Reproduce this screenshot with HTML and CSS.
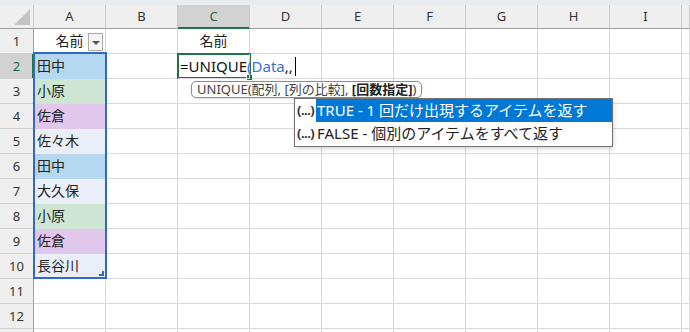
FILE: index.html
```html
<!DOCTYPE html>
<html lang="ja">
<head>
  <meta charset="UTF-8" />
  <title>UNIQUE</title>
  <link rel="stylesheet" href="styles.css">
</head>
<body>
<div class="app">
  <div class="topbar"></div>

  <div class="sheet">
    <div class="corner"><span class="tri"></span></div>
    <div class="colhead">A</div><div class="colhead">B</div><div class="colhead sel">C</div><div class="colhead">D</div><div class="colhead">E</div><div class="colhead">F</div><div class="colhead">G</div><div class="colhead">H</div><div class="colhead">I</div><div class="colhead"></div>

    <div class="rowhead">1</div><div class="cell center hasfilter">名前<span class="filter"></span></div><div class="cell"></div><div class="cell center">名前</div><div class="cell"></div><div class="cell"></div><div class="cell"></div><div class="cell"></div><div class="cell"></div><div class="cell"></div><div class="cell"></div>

    <div class="rowhead sel">2</div><div class="cell blue">田中</div><div class="cell"></div><div class="cell editing">=UNIQUE<span class="ref">(Data</span>,,<span class="caret"></span></div><div class="cell"></div><div class="cell"></div><div class="cell"></div><div class="cell"></div><div class="cell"></div><div class="cell"></div><div class="cell"></div>

    <div class="rowhead">3</div><div class="cell green">小原</div><div class="cell"></div><div class="cell"></div><div class="cell"></div><div class="cell"></div><div class="cell"></div><div class="cell"></div><div class="cell"></div><div class="cell"></div><div class="cell"></div>

    <div class="rowhead">4</div><div class="cell purple">佐倉</div><div class="cell"></div><div class="cell"></div><div class="cell"></div><div class="cell"></div><div class="cell"></div><div class="cell"></div><div class="cell"></div><div class="cell"></div><div class="cell"></div>

    <div class="rowhead">5</div><div class="cell tint">佐々木</div><div class="cell"></div><div class="cell"></div><div class="cell"></div><div class="cell"></div><div class="cell"></div><div class="cell"></div><div class="cell"></div><div class="cell"></div><div class="cell"></div>

    <div class="rowhead">6</div><div class="cell blue">田中</div><div class="cell"></div><div class="cell"></div><div class="cell"></div><div class="cell"></div><div class="cell"></div><div class="cell"></div><div class="cell"></div><div class="cell"></div><div class="cell"></div>

    <div class="rowhead">7</div><div class="cell tint">大久保</div><div class="cell"></div><div class="cell"></div><div class="cell"></div><div class="cell"></div><div class="cell"></div><div class="cell"></div><div class="cell"></div><div class="cell"></div><div class="cell"></div>

    <div class="rowhead">8</div><div class="cell green">小原</div><div class="cell"></div><div class="cell"></div><div class="cell"></div><div class="cell"></div><div class="cell"></div><div class="cell"></div><div class="cell"></div><div class="cell"></div><div class="cell"></div>

    <div class="rowhead">9</div><div class="cell purple">佐倉</div><div class="cell"></div><div class="cell"></div><div class="cell"></div><div class="cell"></div><div class="cell"></div><div class="cell"></div><div class="cell"></div><div class="cell"></div><div class="cell"></div>

    <div class="rowhead">10</div><div class="cell tint">長谷川</div><div class="cell"></div><div class="cell"></div><div class="cell"></div><div class="cell"></div><div class="cell"></div><div class="cell"></div><div class="cell"></div><div class="cell"></div><div class="cell"></div>

    <div class="rowhead">11</div><div class="cell"></div><div class="cell"></div><div class="cell"></div><div class="cell"></div><div class="cell"></div><div class="cell"></div><div class="cell"></div><div class="cell"></div><div class="cell"></div><div class="cell"></div>

    <div class="rowhead">12</div><div class="cell"></div><div class="cell"></div><div class="cell"></div><div class="cell"></div><div class="cell"></div><div class="cell"></div><div class="cell"></div><div class="cell"></div><div class="cell"></div><div class="cell"></div>

    <div class="rowhead"></div><div class="cell"></div><div class="cell"></div><div class="cell"></div><div class="cell"></div><div class="cell"></div><div class="cell"></div><div class="cell"></div><div class="cell"></div><div class="cell"></div><div class="cell"></div>
  </div>

  <!-- selection overlays -->
  <div class="range"><span class="range-handle"></span></div>
  <div class="active"><span class="active-handle"></span></div>

  <!-- formula hint -->
  <div class="hint">UNIQUE(配列, [列の比較], <b>[回数指定]</b>)</div>

  <div class="menu">
    <div class="menu-item selected"><span class="arg">(...)</span><span class="label">TRUE - 1 回だけ出現するアイテムを返す</span></div>
    <div class="menu-item"><span class="arg">(...)</span><span class="label">FALSE - 個別のアイテムをすべて返す</span></div>
  </div>
</div>
</body>
</html>
```

FILE: styles.css
```css
body {
  margin: 0;
  font-family: "Noto Sans", "Noto Sans CJK JP", sans-serif;
  background: #fff;
  overflow: hidden;
}
.app {
  position: relative;
  width: 690px;
  height: 332px;
  overflow: hidden;
}
.topbar {
  height: 5px;
  background: #e8ebef;
}
.sheet {
  display: grid;
  grid-template-columns: 34px repeat(9, 72px) 1fr;
  grid-template-rows: 24px;
  grid-auto-rows: 25px;
}
.sheet > div {
  box-sizing: border-box;
  border-right: 1px solid #dadada;
  border-bottom: 1px solid #dadada;
  line-height: 24px;
  font-size: 14px;
  color: #222;
  white-space: nowrap;
}
.corner {
  background: #efefef;
  display: flex;
  align-items: flex-end;
  justify-content: flex-end;
  padding: 0 3px 3px 0;
  border-right-color: #c9c9c9 !important;
  border-bottom-color: #9e9e9e !important;
}
.tri {
  width: 16px;
  height: 16px;
  background: #c4c4c4;
  clip-path: polygon(100% 0, 100% 100%, 0 100%);
}
.colhead {
  background: #efefef;
  text-align: center;
  font-size: 13px !important;
  line-height: 23px !important;
  color: #333 !important;
  border-right-color: #c9c9c9 !important;
  border-bottom-color: #9e9e9e !important;
}
.colhead.sel {
  background: #d2d2d2;
  color: #1d6a3e !important;
  border-bottom-color: #217346 !important;
  box-shadow: inset 0 -1px 0 #217346;
}
.rowhead {
  background: #efefef;
  text-align: center;
  font-size: 13px !important;
  color: #333 !important;
  border-right-color: #9e9e9e !important;
  border-bottom-color: #d2d2d2 !important;
}
.rowhead.sel {
  background: #d2d2d2;
  color: #1d6a3e !important;
  border-right-color: #217346 !important;
  box-shadow: inset -1px 0 0 #217346;
}
.cell {
  padding-left: 3px;
}
.center {
  text-align: center;
  padding-left: 0;
}
.hasfilter {
  position: relative;
}
.filter {
  position: absolute;
  right: 2px;
  top: 4px;
  width: 13px;
  height: 16px;
  border: 1px solid #ababab;
  background: #f4f4f4;
}
.filter::after {
  content: "";
  position: absolute;
  left: 3px;
  top: 7px;
  border-left: 4px solid transparent;
  border-right: 4px solid transparent;
  border-top: 4px solid #555;
}
.blue { background: #b4d8ef; border-bottom-color: transparent !important; }
.green { background: #cee5d3; border-bottom-color: transparent !important; }
.purple { background: #e1c7ec; border-bottom-color: transparent !important; }
.tint { background: #e9eef8; border-bottom-color: transparent !important; }

.editing {
  position: relative;
  z-index: 2;
  overflow: visible;
  font-size: 15px !important;
  color: #111 !important;
  padding-left: 2px;
}
.ref {
  color: #3f6fc8;
}
.caret {
  display: inline-block;
  width: 1px;
  height: 19px;
  background: #000;
  vertical-align: -4px;
  margin-left: 2px;
}

/* overlays */
.range {
  position: absolute;
  left: 33px;
  top: 52px;
  width: 74px;
  height: 227px;
  box-sizing: border-box;
  border: 2px solid #3068cc;
}
.range-handle {
  position: absolute;
  right: 1px;
  bottom: 1px;
  width: 3px;
  height: 3px;
  border-right: 2px solid #3068cc;
  border-bottom: 2px solid #3068cc;
}
.active {
  position: absolute;
  z-index: 1;
  left: 177px;
  top: 53px;
  width: 74px;
  height: 26px;
  box-sizing: border-box;
  border: 2px solid #217346;
}
.active-handle {
  position: absolute;
  right: -4px;
  bottom: -4px;
  width: 5px;
  height: 5px;
  background: #217346;
  border: 1px solid #fff;
}
.hint {
  position: absolute;
  z-index: 3;
  left: 191px;
  top: 81px;
  height: 17px;
  box-sizing: border-box;
  padding: 0 5px;
  border: 1px solid #8c8c8c;
  border-radius: 5px;
  background: #fff;
  font-size: 13px;
  line-height: 15px;
  color: #444;
  white-space: nowrap;
  box-shadow: 0 1px 2px rgba(0,0,0,0.12);
}
.hint b {
  color: #222;
}
.menu {
  position: absolute;
  z-index: 3;
  left: 294px;
  top: 98px;
  width: 319px;
  height: 49px;
  box-sizing: border-box;
  border: 1px solid #747474;
  background: #fff;
  box-shadow: 1px 2px 4px rgba(0,0,0,0.15);
}
.menu-item {
  display: flex;
  height: 23px;
  line-height: 23px;
  font-size: 15px;
  color: #222;
  white-space: nowrap;
}
.arg {
  width: 19px;
  padding-left: 2px;
  font-size: 13px;
  font-weight: bold;
  letter-spacing: -0.5px;
  color: #333;
  overflow: hidden;
}
.label {
  flex: 1;
  padding-left: 1px;
}
.selected .label {
  background: #0078d7;
  color: #fff;
}
```
